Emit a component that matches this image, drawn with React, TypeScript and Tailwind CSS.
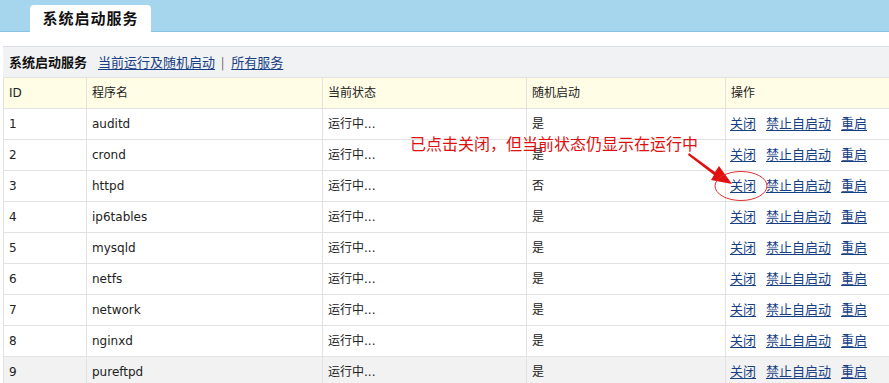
import React from "react";

const services = [
  { id: 1, name: "auditd", boot: "是" },
  { id: 2, name: "crond", boot: "是" },
  { id: 3, name: "httpd", boot: "否" },
  { id: 4, name: "ip6tables", boot: "是" },
  { id: 5, name: "mysqld", boot: "是" },
  { id: 6, name: "netfs", boot: "是" },
  { id: 7, name: "network", boot: "是" },
  { id: 8, name: "nginxd", boot: "是" },
  { id: 9, name: "pureftpd", boot: "是" },
];

const font = "font-['DejaVu_Sans','Noto_Sans_CJK_SC',sans-serif]";
const linkCls = "text-[13px] text-[#173f84] underline underline-offset-2";

export default function App() {
  return (
    <div className={`relative h-[383px] w-[889px] overflow-hidden bg-white text-[12px] text-[#222] ${font}`}>
      {/* top bar with tab */}
      <div className="flex h-[32px] items-end border-b border-[#86c3e2] bg-[#a6d6ee] pl-[30px]">
        <div className="-mb-px flex h-[27px] w-[121px] items-center justify-center rounded-t-[4px] bg-white font-['Noto_Sans_CJK_SC',sans-serif] text-[15px] font-bold tracking-[1px] text-[#111]">
          系统启动服务
        </div>
      </div>

      <div className="ml-[3px] mt-[14px]">
        {/* toolbar band */}
        <div className="flex h-[31px] items-center border-t border-[#dcdfe3] bg-[#f1f2f4] pl-[6px] font-['Noto_Sans_CJK_SC',sans-serif]">
          <span className="text-[13px] font-bold text-[#111]">系统启动服务</span>
          <a className={`${linkCls} ml-[11px]`}>当前运行及随机启动</a>
          <span className="ml-[6px] text-[#555]">|</span>
          <a className={`${linkCls} ml-[7px]`}>所有服务</a>
        </div>

        <table className="w-[886px] table-fixed border-collapse">
          <colgroup>
            <col className="w-[83px]" />
            <col className="w-[236px]" />
            <col className="w-[204px]" />
            <col className="w-[199px]" />
            <col className="w-[164px]" />
          </colgroup>
          <thead>
            <tr className="h-[31px] bg-[#fffde6] text-left">
              {["ID", "程序名", "当前状态", "随机启动", "操作"].map((h) => (
                <th key={h} className="border border-[#e2e2e2] pl-[5px] font-normal">
                  {h}
                </th>
              ))}
            </tr>
          </thead>
          <tbody>
            {services.map((s) => (
              <tr key={s.id} className={`h-[31px] ${s.id === 9 ? "bg-[#f2f2f2]" : ""}`}>
                <td className="border border-[#e2e2e2] pl-[5px]">{s.id}</td>
                <td className="border border-[#e2e2e2] pl-[5px]">{s.name}</td>
                <td className="border border-[#e2e2e2] pl-[5px]">运行中...</td>
                <td className="border border-[#e2e2e2] pl-[5px]">{s.boot}</td>
                <td className="border border-[#e2e2e2] pl-[4px]">
                  <div className="flex gap-[10px]">
                    <a className={linkCls}>关闭</a>
                    <a className={linkCls}>禁止自启动</a>
                    <a className={linkCls}>重启</a>
                  </div>
                </td>
              </tr>
            ))}
          </tbody>
        </table>
      </div>

      {/* annotation */}
      <div className="absolute left-[410px] top-[133px] font-['Noto_Sans_CJK_SC',sans-serif] text-[16px] leading-[20px] text-[#e01010]">
        已点击关闭，但当前状态仍显示在运行中
      </div>
      <svg className="absolute left-0 top-0" width="889" height="383" viewBox="0 0 889 383">
        <path d="M689 153 L715 172 L719 166 L732 184 L711 180 L714 175 L688 155 Z" fill="#e01010" />
        <ellipse cx="741" cy="186" rx="26" ry="14.5" fill="none" stroke="#e03030" strokeWidth="1" />
      </svg>
    </div>
  );
}
